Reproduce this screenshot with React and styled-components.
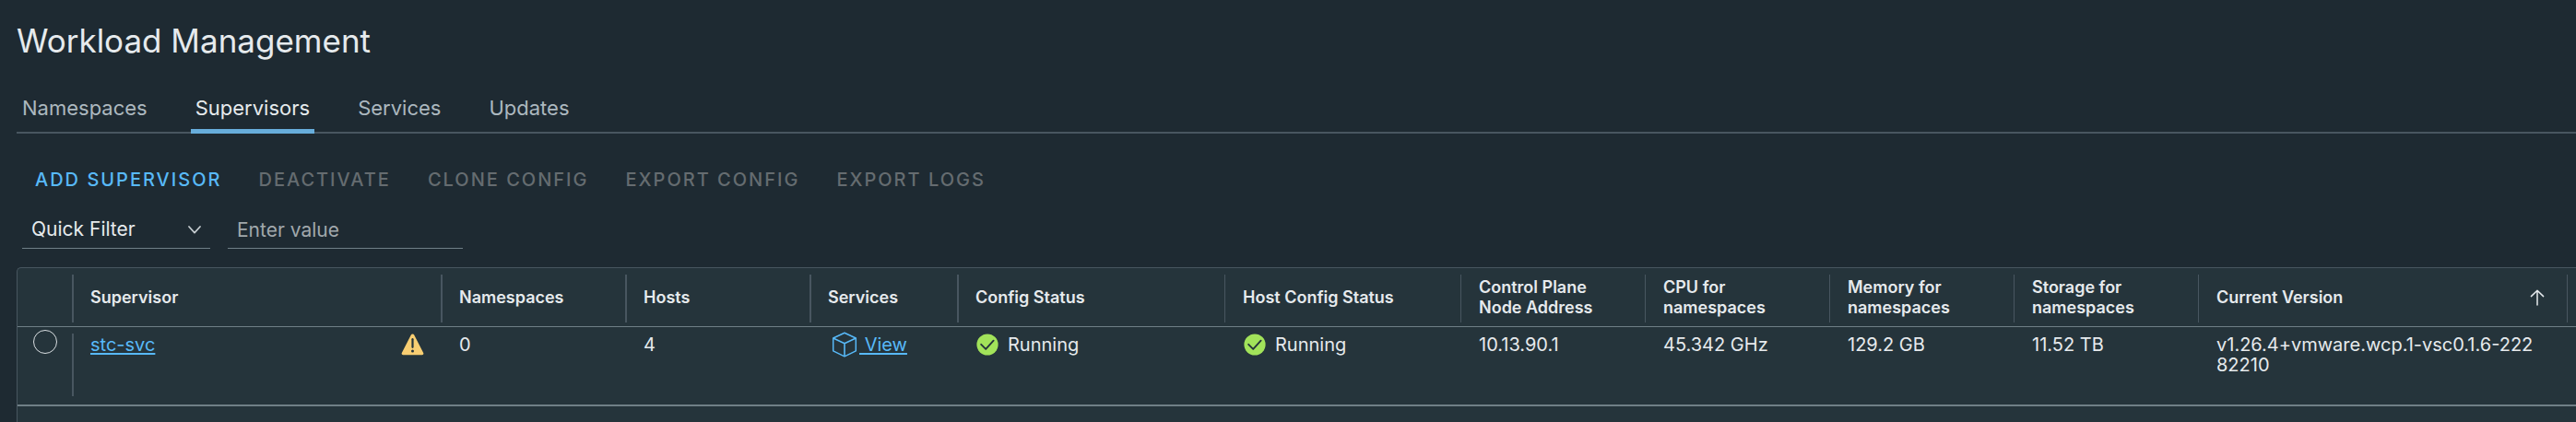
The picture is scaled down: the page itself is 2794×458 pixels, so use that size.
import React, { useState } from 'react';
import styled, { createGlobalStyle, ThemeProvider } from 'styled-components';

const theme = {
  page: '#1e2a32',
  panel: '#25343b',
  text: '#e6eaed',
  muted: '#acb8bf',
  placeholder: '#a1a8ac',
  disabled: '#656c70',
  link: '#58b9f8',
  accent: '#67addb',
  rule: '#485660',
  gridRule: '#6f7f86',
  ok: '#a2e35a',
  warn: '#f8ce72',
};

const GlobalStyle = createGlobalStyle`
  *, *::before, *::after { box-sizing: border-box; }
  body {
    margin: 0;
    background: ${theme.page};
    color: ${theme.text};
    font-family: Inter, "Open Sans", sans-serif;
    font-size: 20px;
    line-height: 22px;
    overflow-x: hidden;
  }
  button, input, select { font: inherit; color: inherit; }
`;

const Page = styled.main`
  display: flex;
  flex-direction: column;
  min-height: 100vh;
  padding: 22px 0 0 18px;
`;

const Title = styled.h1`
  margin: 0;
  font-size: 35px;
  line-height: 44px;
  font-weight: 400;
`;

const Tabs = styled.div`
  display: flex;
  gap: 42px;
  margin-top: 40px;
  padding-left: 1px;
  box-shadow: inset 0 -2px ${(p) => p.theme.rule};
`;

const Tab = styled.button`
  padding: 0 5px 12px;
  border: 0;
  border-bottom: 5px solid ${(p) => (p.$active ? p.theme.accent : 'transparent')};
  background: none;
  color: ${(p) => (p.$active ? p.theme.text : p.theme.muted)};
  font-size: 22px;
  line-height: 22px;
  cursor: pointer;
`;

const Toolbar = styled.div`
  display: flex;
  margin-top: 38px;
`;

const Action = styled.button`
  padding: 0 20px;
  border: 0;
  background: none;
  color: ${(p) => p.theme.link};
  font-weight: 500;
  line-height: 24px;
  letter-spacing: 2px;
  text-transform: uppercase;
  cursor: pointer;

  &:disabled {
    color: ${(p) => p.theme.disabled};
    cursor: default;
  }
`;

const Filters = styled.div`
  display: flex;
  gap: 19px;
  margin: 22px 0 20px;
  padding-left: 6px;
`;

const SelectBox = styled.div`
  display: grid;
  align-items: center;
  width: 204px;

  & > * { grid-area: 1 / 1; }
  & > svg { justify-self: end; margin-right: 10px; pointer-events: none; }
`;

const Select = styled.select`
  width: 100%;
  height: 41px;
  padding: 0 10px;
  border: 0;
  border-bottom: 1px solid ${(p) => p.theme.gridRule};
  border-radius: 0;
  appearance: none;
  background: transparent;
  font-size: 21px;
`;

const FilterInput = styled.input`
  width: 255px;
  height: 41px;
  padding: 0 10px;
  border: 0;
  border-bottom: 1px solid ${(p) => p.theme.gridRule};
  border-radius: 0;
  background: transparent;
  font-size: 21px;

  &::placeholder { color: ${(p) => p.theme.placeholder}; opacity: 1; }
`;

const Grid = styled.section`
  flex: 1;
  min-height: 168px;
  border: 1px solid ${(p) => p.theme.rule};
  border-width: 1px 0 0 1px;
  border-top-left-radius: 5px;
  background: ${(p) => p.theme.panel};
`;

const Table = styled.table`
  width: 100%;
  table-layout: fixed;
  border-collapse: separate;
  border-spacing: 0;
`;

const Col = styled.col`
  width: ${(p) => (p.$width ? `${p.$width}px` : 'auto')};
`;

const HeadCell = styled.th`
  height: 64px;
  padding: 0 20px;
  border-bottom: 1px solid ${(p) => p.theme.gridRule};
  background: ${(p) =>
    p.$rule
      ? `linear-gradient(${p.theme.rule}, ${p.theme.rule}) 0 7px / ${p.$rule}px 52px no-repeat`
      : 'none'};
  font-size: 18px;
  font-weight: 600;
  text-align: left;
`;

const HeadEdge = styled(HeadCell)`
  padding: 0;
`;

const Cell = styled.td`
  height: 86px;
  padding: 8px 18px 0 20px;
  border-bottom: 2px solid ${(p) => p.theme.gridRule};
  background: ${(p) =>
    p.$rule
      ? `linear-gradient(${p.theme.rule}, ${p.theme.rule}) 0 7px / ${p.$rule}px 68px no-repeat`
      : 'none'};
  vertical-align: top;
`;

const VersionCell = styled(Cell)`
  padding-right: 28px;
  word-break: break-all;
`;

const PickCell = styled(Cell)`
  padding: 3px 0 0;
`;

const EdgeCell = styled(Cell)`
  padding: 0;
`;

const Radio = styled.input`
  display: block;
  width: 26px;
  height: 26px;
  margin: 0 auto;
  border: 1px solid #d9dee1;
  border-radius: 50%;
  appearance: none;

  &:checked { border: 8px solid ${(p) => p.theme.accent}; }
`;

const Spread = styled.div`
  display: flex;
  align-items: center;
  justify-content: space-between;
  height: 22px;
`;

const WithIcon = styled.div`
  display: flex;
  align-items: center;
  gap: ${(p) => p.$gap}px;
  height: 22px;
  padding-left: ${(p) => p.$indent || 0}px;
  white-space: nowrap;
`;

const Link = styled.a`
  color: ${(p) => p.theme.link};
  text-decoration: underline 2px;
  text-underline-offset: 2px;
  white-space: pre;
`;

const SortButton = styled.button`
  display: flex;
  align-items: center;
  justify-content: space-between;
  width: 100%;
  padding: 0 4px 0 0;
  border: 0;
  background: none;
  font-weight: 600;
  cursor: pointer;
`;

const Icon = styled.svg`
  display: block;
  flex: none;
`;

const Chevron = () => (
  <Icon width="14" height="9" viewBox="0 0 14 9" aria-hidden="true">
    <path d="M1 1l6 6.6L13 1" fill="none" stroke="#c4cbcf" strokeWidth="1.7" strokeLinecap="round" strokeLinejoin="round" />
  </Icon>
);

const WarningIcon = () => (
  <Icon width="25" height="24" viewBox="0 0 25 24" role="img" aria-label="Warning">
    <path d="M10.8 1.5a1.9 1.9 0 0 1 3.4 0l10 19.4a1.6 1.6 0 0 1-1.4 2.3H2.2a1.6 1.6 0 0 1-1.4-2.3z" fill={theme.warn} />
    <path d="M12.5 6.2v8.6" stroke={theme.panel} strokeWidth="2.2" strokeLinecap="round" />
    <circle cx="12.5" cy="19" r="1.5" fill={theme.panel} />
  </Icon>
);

const CubeIcon = () => (
  <Icon width="28" height="28" viewBox="0 0 28 28" aria-hidden="true">
    <g fill="none" stroke={theme.link} strokeLinejoin="round">
      <path d="M14 1.2L26.3 7v13.8L14 26.8 1.7 20.8V7z" strokeWidth="1.5" />
      <path d="M1.7 7L14 12.8 26.3 7M14 12.8v14" strokeWidth="1.6" />
    </g>
  </Icon>
);

const CheckIcon = () => (
  <Icon width="24" height="24" viewBox="0 0 24 24" aria-hidden="true">
    <circle cx="12" cy="12" r="11.6" fill={theme.ok} />
    <path d="M5.2 11.8l5 5.1 8.4-9.2" fill="none" stroke={theme.panel} strokeWidth="1.9" strokeLinecap="round" strokeLinejoin="round" />
  </Icon>
);

const ArrowUpIcon = () => (
  <Icon width="16" height="18" viewBox="0 0 16 18" aria-hidden="true">
    <path d="M8 17V1.2M1.4 7.6L8 1.2l6.6 6.4" fill="none" stroke={theme.text} strokeWidth="1.5" strokeLinecap="round" strokeLinejoin="round" />
  </Icon>
);

const tabs = ['Namespaces', 'Supervisors', 'Services', 'Updates'];
const disabledActions = ['Deactivate', 'Clone Config', 'Export Config', 'Export Logs'];

const columns = [
  { name: 'Supervisor', width: 400, rule: 2 },
  { name: 'Namespaces', width: 200, rule: 2 },
  { name: 'Hosts', width: 200, rule: 2 },
  { name: 'Services', width: 160, rule: 2 },
  { name: 'Config Status', width: 290, rule: 2 },
  { name: 'Host Config Status', width: 256, rule: 1 },
  { name: 'Control Plane Node Address', width: 200, rule: 1 },
  { name: 'CPU for namespaces', width: 200, rule: 1 },
  { name: 'Memory for namespaces', width: 200, rule: 1 },
  { name: 'Storage for namespaces', width: 200, rule: 1 },
  { name: 'Current Version', width: 400, rule: 1, sorted: true },
];

const supervisors = [
  {
    name: 'stc-svc',
    namespaces: 0,
    hosts: 4,
    config: 'Running',
    hostConfig: 'Running',
    address: '10.13.90.1',
    cpu: '45.342 GHz',
    memory: '129.2 GB',
    storage: '11.52 TB',
    version: 'v1.26.4+vmware.wcp.1-vsc0.1.6-22282210',
  },
];

const Status = ({ children }) => (
  <WithIcon $gap={10} $indent={1}>
    <CheckIcon />
    {children}
  </WithIcon>
);

export default function App() {
  const [active, setActive] = useState('Supervisors');

  return (
    <ThemeProvider theme={theme}>
      <GlobalStyle />
      <Page>
        <Title>Workload Management</Title>
        <Tabs role="tablist">
          {tabs.map((tab) => (
            <Tab key={tab} role="tab" aria-selected={tab === active} $active={tab === active} onClick={() => setActive(tab)}>
              {tab}
            </Tab>
          ))}
        </Tabs>
        <Toolbar>
          <Action>Add Supervisor</Action>
          {disabledActions.map((name) => (
            <Action key={name} disabled>{name}</Action>
          ))}
        </Toolbar>
        <Filters>
          <SelectBox>
            <Select aria-label="Filter type">
              <option>Quick Filter</option>
            </Select>
            <Chevron />
          </SelectBox>
          <FilterInput aria-label="Filter value" placeholder="Enter value" />
        </Filters>
        <Grid>
          <Table>
            <colgroup>
              <Col $width={59} />
              {columns.map((c) => <Col key={c.name} $width={c.width} />)}
              <Col />
            </colgroup>
            <thead>
              <tr>
                <HeadEdge aria-label="Select" />
                {columns.map((c) => (
                  <HeadCell key={c.name} $rule={c.rule} scope="col">
                    {c.sorted ? <SortButton>{c.name}<ArrowUpIcon /></SortButton> : c.name}
                  </HeadCell>
                ))}
                <HeadEdge $rule={1} />
              </tr>
            </thead>
            <tbody>
              {supervisors.map((s) => (
                <tr key={s.name}>
                  <PickCell>
                    <Radio type="radio" name="supervisor" aria-label={`Select ${s.name}`} />
                  </PickCell>
                  <Cell $rule={2}>
                    <Spread>
                      <Link href="#supervisor">{s.name}</Link>
                      <WarningIcon />
                    </Spread>
                  </Cell>
                  <Cell>{s.namespaces}</Cell>
                  <Cell>{s.hosts}</Cell>
                  <Cell>
                    <WithIcon $gap={2} $indent={4}>
                      <CubeIcon />
                      <Link href="#services"> View</Link>
                    </WithIcon>
                  </Cell>
                  <Cell><Status>{s.config}</Status></Cell>
                  <Cell><Status>{s.hostConfig}</Status></Cell>
                  <Cell>{s.address}</Cell>
                  <Cell>{s.cpu}</Cell>
                  <Cell>{s.memory}</Cell>
                  <Cell>{s.storage}</Cell>
                  <VersionCell>{s.version}</VersionCell>
                  <EdgeCell />
                </tr>
              ))}
            </tbody>
          </Table>
        </Grid>
      </Page>
    </ThemeProvider>
  );
}
